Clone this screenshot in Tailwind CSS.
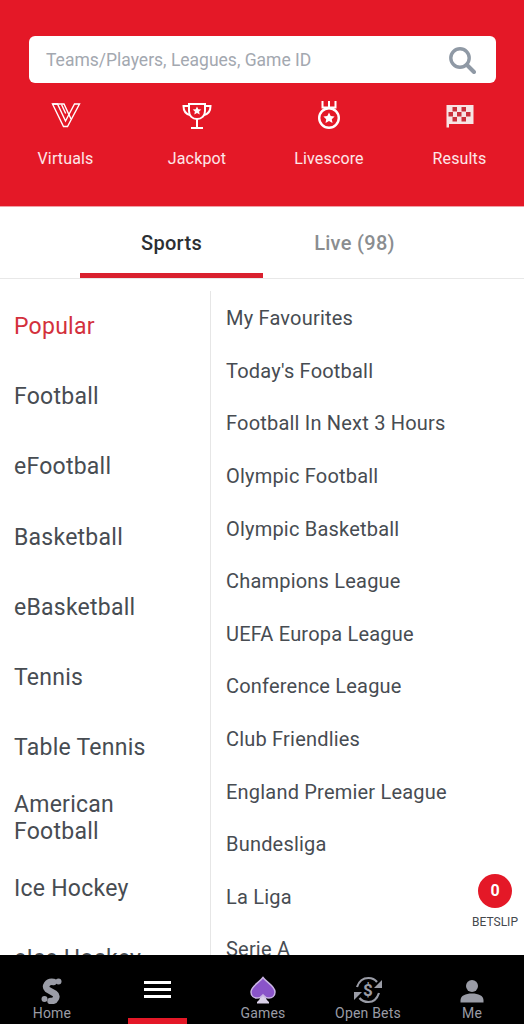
<!DOCTYPE html>
<html lang="en">
<head>
  <meta charset="UTF-8" />
  <meta name="viewport" content="width=device-width, initial-scale=1.0" />
  <title>Sports</title>
  <script src="https://cdn.jsdelivr.net/npm/@tailwindcss/browser@4"></script>
</head>
<body class="bg-white font-['Roboto',sans-serif]">
  <div class="relative h-[1024px] w-[524px] overflow-hidden flex flex-col">

    <!-- header -->
    <header class="h-[207px] shrink-0 bg-[#e41827] pt-9 border-b border-[#f0a0a6]">
      <div class="ml-[29px] mr-[28px] h-[47px] bg-white rounded-md flex items-center justify-between pl-[17px] pr-[20px]">
        <span class="pt-[2px] text-[17.5px] text-[#a3a8b0]">Teams/Players, Leagues, Game ID</span>
        <svg class="w-[28px] h-[28px]" viewBox="0 0 28 28" fill="none" stroke="#8f99a5">
          <circle cx="12" cy="12" r="9.2" stroke-width="3.4" />
          <path d="M19 19l7 7" stroke-width="4" stroke-linecap="round" />
        </svg>
      </div>
      <div class="grid grid-cols-[131px_132px_132px_129px] mt-[17px] text-white/90 text-[16px] leading-[18px] tracking-[0.15px]">
        <div class="flex flex-col items-center">
          <svg class="w-[30px] h-[30px]" viewBox="0 0 30 30" fill="none" stroke="white" stroke-width="1.400">
            <path d="M1.500 4L12.500 26.500H16.500L28.500 4H23.500L14.500 21L6.500 4z" />
            <path d="M1.500 4H13L20 19" />
            <path d="M10.500 4.500L14.700 13.500" />
          </svg>
          <span class="mt-[20px]">Virtuals</span>
        </div>
        <div class="flex flex-col items-center">
          <svg class="w-[30px] h-[30px]" viewBox="0 0 30 30" fill="none" stroke="white" stroke-width="2">
            <path d="M7 4h16v7c0 5-3.500 8-8 8s-8-3-8-8z" />
            <path d="M7 6H1.500c0 5 2 8 6.500 9M23 6h5.500c0 5-2 8-6.500 9" />
            <path d="M15 19v8M9 28h12" />
            <path d="M15 6.500l1.300 2.800 3 .3-2.200 2 .6 3-2.700-1.500-2.700 1.500.6-3-2.200-2 3-.3z" fill="white" stroke="none" />
          </svg>
          <span class="mt-[20px]">Jackpot</span>
        </div>
        <div class="flex flex-col items-center">
          <svg class="w-[30px] h-[30px]" viewBox="0 0 30 30" fill="none" stroke="white" stroke-width="2.400">
            <circle cx="15" cy="18" r="9.800" />
            <path d="M8.500 1V7.500H21.500V1M15 1V7.500" stroke-width="2" />
            <path d="M15 12.500l1.700 3.500 3.900.5-2.800 2.700.7 3.800-3.500-1.900-3.500 1.900.7-3.800-2.800-2.700 3.900-.5z" fill="white" stroke="none" />
          </svg>
          <span class="mt-[20px]">Livescore</span>
        </div>
        <div class="flex flex-col items-center">
          <svg class="w-[30px] h-[30px]" viewBox="0 0 30 30">
            <path d="M1.500 5H28.500V24H4V27.500H1.500z" fill="#f7e4e5" />
            <g fill="#c9303c">
              <rect x="7.500" y="7" width="4.500" height="4.500" />
              <rect x="16.500" y="7" width="4.500" height="4.500" />
              <rect x="3.500" y="12" width="4.500" height="4.500" />
              <rect x="12" y="12" width="4.500" height="4.500" />
              <rect x="21" y="12" width="4.500" height="4.500" />
              <rect x="7.500" y="17" width="4.500" height="4.500" />
              <rect x="16.500" y="17" width="4.500" height="4.500" />
            </g>
          </svg>
          <span class="mt-[20px]">Results</span>
        </div>
      </div>
    </header>

    <!-- tabs -->
    <div class="h-[72px] shrink-0 border-b border-[#e8e8e8] px-[80px] grid grid-cols-[183px_183px] text-[20px] font-medium tracking-[0.3px]">
      <div class="flex items-center justify-center text-[#2b2f33] border-b-[5px] border-[#d9202e] h-[71px] pt-[6px] -mb-[1px]">Sports</div>
      <div class="flex items-center justify-center text-[#8a8d90] h-[71px] pt-[1px]">Live (98)</div>
    </div>

    <!-- menu columns -->
    <main class="flex-1 flex overflow-hidden pt-[12px] min-h-0">
      <div class="w-[211px] shrink-0 border-r border-[#e6e6e6] pl-[14px] pr-4 text-[23px] leading-[27px] tracking-[0.25px] text-[#474c52]">
        <div class="h-[70.300px] flex items-center text-[#d3303c]">Popular</div>
        <div class="h-[70.300px] flex items-center">Football</div>
        <div class="h-[70.300px] flex items-center">eFootball</div>
        <div class="h-[70.300px] flex items-center">Basketball</div>
        <div class="h-[70.300px] flex items-center">eBasketball</div>
        <div class="h-[70.300px] flex items-center">Tennis</div>
        <div class="h-[70.300px] flex items-center">Table Tennis</div>
        <div class="h-[70.300px] flex items-center">American<br />Football</div>
        <div class="h-[70.300px] flex items-center">Ice Hockey</div>
        <div class="h-[70.300px] flex items-center">eIce Hockey</div>
      </div>
      <div class="flex-1 pt-[1px] pl-[15px] text-[20px] tracking-[0.2px] text-[#474c52]">
        <div class="h-[52.600px] flex items-center">My Favourites</div>
        <div class="h-[52.600px] flex items-center">Today's Football</div>
        <div class="h-[52.600px] flex items-center">Football In Next 3 Hours</div>
        <div class="h-[52.600px] flex items-center">Olympic Football</div>
        <div class="h-[52.600px] flex items-center">Olympic Basketball</div>
        <div class="h-[52.600px] flex items-center">Champions League</div>
        <div class="h-[52.600px] flex items-center">UEFA Europa League</div>
        <div class="h-[52.600px] flex items-center">Conference League</div>
        <div class="h-[52.600px] flex items-center">Club Friendlies</div>
        <div class="h-[52.600px] flex items-center">England Premier League</div>
        <div class="h-[52.600px] flex items-center">Bundesliga</div>
        <div class="h-[52.600px] flex items-center">La Liga</div>
        <div class="h-[52.600px] flex items-center">Serie A</div>
      </div>
    </main>

    <!-- bottom nav -->
    <nav class="relative z-10 h-[69px] shrink-0 bg-black grid grid-cols-[104px_106px_106px_104px_104px] text-[14px] tracking-[0.2px] text-[#9a9ca6]">
      <div class="flex flex-col items-center justify-end pb-[2px]">
        <svg class="w-[22px] h-[26px]" viewBox="0 0 22 26">
          <circle cx="17.500" cy="3.500" r="3" fill="#9a9ca6" />
          <circle cx="3.500" cy="21" r="3" fill="#9a9ca6" />
          <path d="M12.500 4C6 3 3.500 8.500 6.500 11.500L13.500 15.500C17 18 15 23.500 9.500 23" fill="none" stroke="#9a9ca6" stroke-width="6.500" stroke-linecap="round" />
        </svg>
        <span class="mt-[1px] leading-[17px]">Home</span>
      </div>
      <div class="relative flex flex-col items-center pt-[26px]">
        <div class="w-[27px] h-[3px] bg-white"></div>
        <div class="w-[27px] h-[3px] bg-white mt-[4px]"></div>
        <div class="w-[27px] h-[3px] bg-white mt-[4px]"></div>
        <div class="absolute left-[24px] right-[23px] bottom-0 h-[6px] bg-[#e41827]"></div>
      </div>
      <div class="flex flex-col items-center justify-end pb-[2px]">
        <svg class="w-[28px] h-[28px]" viewBox="0 0 28 28">
          <path d="M11.500 20c-.2 2.500-1.500 4.500-3.500 6v1.500h12V26c-2-1.500-3.300-3.500-3.500-6z" fill="#d9d0e8" />
          <path d="M14 1.500C10.500 6.500 2 10 2 16c0 4 3 6 6 6 2.500 0 4.500-1 6-3 1.500 2 3.500 3 6 3 3 0 6-2 6-6 0-6-8.500-9.500-12-14.500z" fill="#8a54c9" stroke="#c9b4e4" stroke-width="1.500" />
        </svg>
        <span class="mt-[1px] leading-[17px]">Games</span>
      </div>
      <div class="flex flex-col items-center justify-end pb-[2px]">
        <svg class="w-[32px] h-[28px]" viewBox="0 0 32 28" fill="none" stroke="#9a9ca6" stroke-width="2.200">
          <path d="M5 11C7 5 11 2 16.500 2c3.500 0 6.500 1.500 8.500 4" />
          <path d="M27 17c-2 6-5.500 9-10.500 9-4 0-7-1.500-9-4" />
          <path d="M30 4v8h-8zM2 24v-8h8z" fill="#9a9ca6" stroke="none" />
          <text x="16" y="20" text-anchor="middle" font-size="17" font-weight="700" fill="#9a9ca6" stroke="none" font-family="Roboto">$</text>
        </svg>
        <span class="mt-[1px] leading-[17px]">Open Bets</span>
      </div>
      <div class="flex flex-col items-center justify-end pb-[2px]">
        <svg class="w-[24px] h-[26px]" viewBox="0 0 24 26" fill="#9a9ca6">
          <circle cx="12" cy="8" r="6" />
          <path d="M.5 24.500v-2c0-5 5-7 11.500-7s11.500 2 11.500 7v2z" />
        </svg>
        <span class="mt-[1px] leading-[17px]">Me</span>
      </div>
    </nav>

    <!-- floating betslip -->
    <div class="absolute left-[470px] top-[874px] w-[50px] flex flex-col items-center z-20">
      <div class="w-[34px] h-[34px] rounded-full bg-[#e41827] text-white font-bold text-[16px] flex items-center justify-center">0</div>
      <span class="mt-[6px] text-[12px] leading-[16px] text-[#44484d] whitespace-nowrap">BETSLIP</span>
    </div>
  </div>
</body>
</html>
